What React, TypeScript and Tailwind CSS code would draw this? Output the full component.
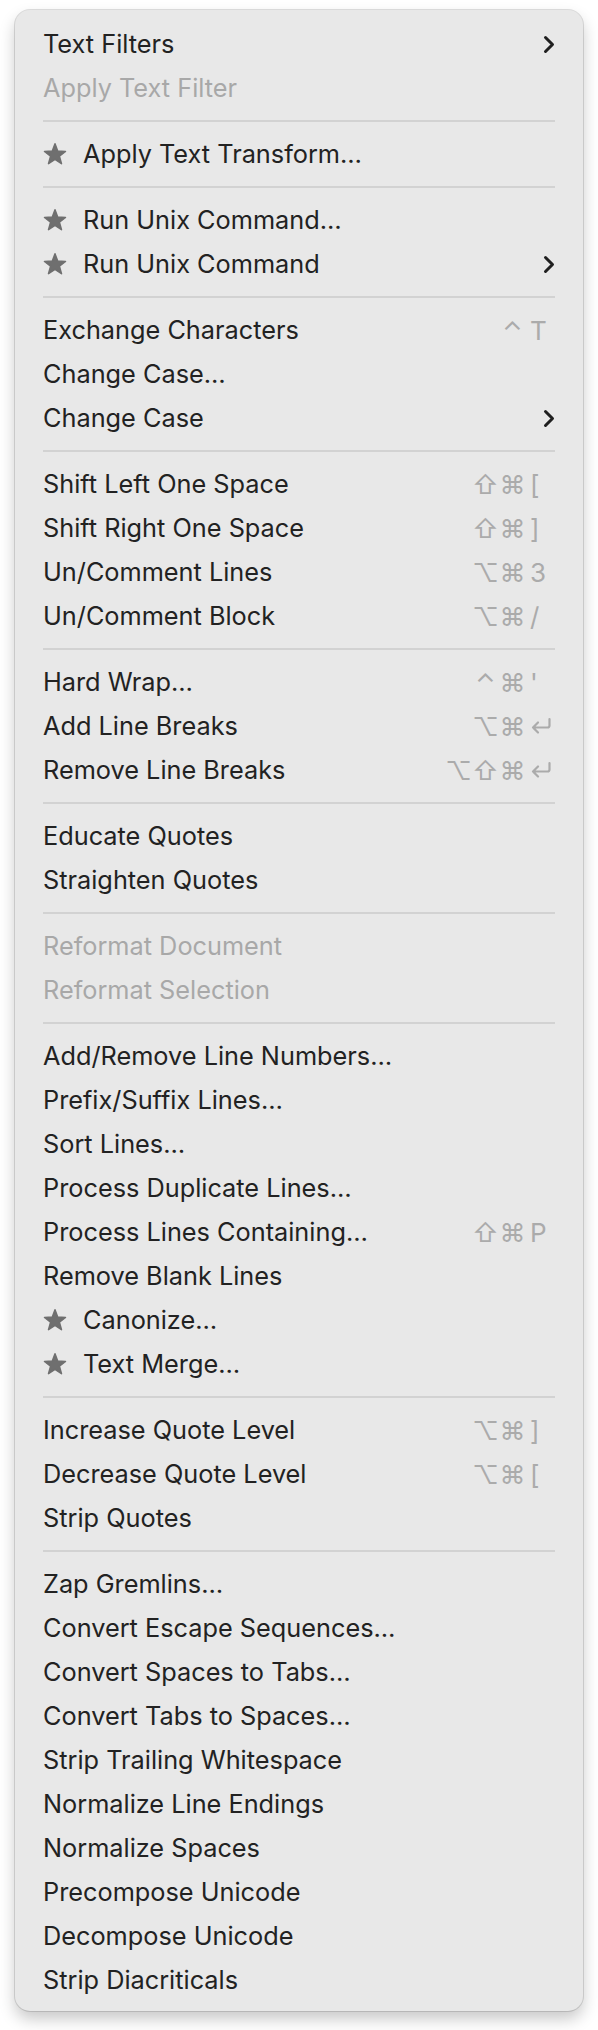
type Shortcut = { mods: string[]; key: string }

type Item = {
  label: string
  disabled?: boolean
  star?: boolean
  submenu?: boolean
  shortcut?: Shortcut
}

const sections: Item[][] = [
  [{ label: 'Text Filters', submenu: true }, { label: 'Apply Text Filter', disabled: true }],
  [{ label: 'Apply Text Transform…', star: true }],
  [
    { label: 'Run Unix Command…', star: true },
    { label: 'Run Unix Command', star: true, submenu: true },
  ],
  [
    { label: 'Exchange Characters', shortcut: { mods: ['⌃'], key: 'T' } },
    { label: 'Change Case…' },
    { label: 'Change Case', submenu: true },
  ],
  [
    { label: 'Shift Left One Space', shortcut: { mods: ['⇧', '⌘'], key: '[' } },
    { label: 'Shift Right One Space', shortcut: { mods: ['⇧', '⌘'], key: ']' } },
    { label: 'Un/Comment Lines', shortcut: { mods: ['⌥', '⌘'], key: '3' } },
    { label: 'Un/Comment Block', shortcut: { mods: ['⌥', '⌘'], key: '/' } },
  ],
  [
    { label: 'Hard Wrap…', shortcut: { mods: ['⌃', '⌘'], key: "'" } },
    { label: 'Add Line Breaks', shortcut: { mods: ['⌥', '⌘'], key: 'return' } },
    { label: 'Remove Line Breaks', shortcut: { mods: ['⌥', '⇧', '⌘'], key: 'return' } },
  ],
  [{ label: 'Educate Quotes' }, { label: 'Straighten Quotes' }],
  [
    { label: 'Reformat Document', disabled: true },
    { label: 'Reformat Selection', disabled: true },
  ],
  [
    { label: 'Add/Remove Line Numbers…' },
    { label: 'Prefix/Suffix Lines…' },
    { label: 'Sort Lines…' },
    { label: 'Process Duplicate Lines…' },
    { label: 'Process Lines Containing…', shortcut: { mods: ['⇧', '⌘'], key: 'P' } },
    { label: 'Remove Blank Lines' },
    { label: 'Canonize…', star: true },
    { label: 'Text Merge…', star: true },
  ],
  [
    { label: 'Increase Quote Level', shortcut: { mods: ['⌥', '⌘'], key: ']' } },
    { label: 'Decrease Quote Level', shortcut: { mods: ['⌥', '⌘'], key: '[' } },
    { label: 'Strip Quotes' },
  ],
  [
    { label: 'Zap Gremlins…' },
    { label: 'Convert Escape Sequences…' },
    { label: 'Convert Spaces to Tabs…' },
    { label: 'Convert Tabs to Spaces…' },
    { label: 'Strip Trailing Whitespace' },
    { label: 'Normalize Line Endings' },
    { label: 'Normalize Spaces' },
    { label: 'Precompose Unicode' },
    { label: 'Decompose Unicode' },
    { label: 'Strip Diacriticals' },
  ],
]

function Star() {
  return (
    <svg viewBox="0 0 24 24" className="w-[24px] h-[24px] shrink-0" aria-hidden="true">
      <path
        d="M12 1.8L14.7 9.1 22.5 9.4 16.4 14.2 18.5 21.7 12 17.4 5.5 21.7 7.6 14.2 1.5 9.4 9.3 9.1z"
        fill="#6f6f6f"
        stroke="#6f6f6f"
        strokeWidth="1.5"
        strokeLinejoin="round"
      />
    </svg>
  )
}

function Chevron() {
  return (
    <svg viewBox="0 0 12 18" className="w-[12px] h-[19px]" aria-hidden="true">
      <path d="M2.5 2l7 7-7 7" fill="none" stroke="#1f1f1f" strokeWidth="3" strokeLinecap="round" strokeLinejoin="round" />
    </svg>
  )
}

// return key glyph, drawn to match the menu font
function ReturnKey() {
  return (
    <svg viewBox="0 0 22 18" className="w-[22px] h-[18px]" aria-hidden="true">
      <path
        d="M19.5 2v6.5a2 2 0 0 1-2 2H3M8 5.5l-5 5 5 5"
        fill="none"
        stroke="#ababab"
        strokeWidth="2.2"
        strokeLinecap="round"
        strokeLinejoin="round"
      />
    </svg>
  )
}

function Keys({ shortcut }: { shortcut: Shortcut }) {
  return (
    <div className="flex items-center text-[#ababab] text-[26px] font-['Inter','DejaVu_Sans',sans-serif]">
      {shortcut.mods.map((m, i) => (
        <span key={i} className="w-[27px] text-center">
          {m}
        </span>
      ))}
      <span className="w-[25px] ml-[4px] flex items-center">
        {shortcut.key === 'return' ? <ReturnKey /> : shortcut.key}
      </span>
    </div>
  )
}

function Row({ item }: { item: Item }) {
  return (
    <div className="h-[44px] flex items-center justify-between">
      <div className="flex items-center">
        {item.star && (
          <div className="w-[40px] flex items-center">
            <Star />
          </div>
        )}
        <span className={item.disabled ? 'text-[#a8a8a8]' : 'text-[#222222]'}>{item.label}</span>
      </div>
      {item.submenu && <Chevron />}
      {item.shortcut && <Keys shortcut={item.shortcut} />}
    </div>
  )
}

export default function App() {
  return (
    <div className="bg-white w-[598px] h-[2030px] pt-[10px] pl-[15px] font-['Inter','DejaVu_Sans',sans-serif]">
      <div className="w-[568px] bg-[#e8e8e8] rounded-[15px] pt-[12px] pb-[9px] px-[28px] text-[25.3px] shadow-[0_0_0_1px_rgba(0,0,0,0.12),0_8px_16px_rgba(0,0,0,0.22)]">
        {sections.map((section, si) => (
          <div key={si}>
            {si > 0 && (
              <div className="h-[22px] flex items-center">
                <div className="w-full h-[2px] bg-[#d2d2d2]" />
              </div>
            )}
            {section.map((item) => (
              <Row key={item.label} item={item} />
            ))}
          </div>
        ))}
      </div>
    </div>
  )
}
